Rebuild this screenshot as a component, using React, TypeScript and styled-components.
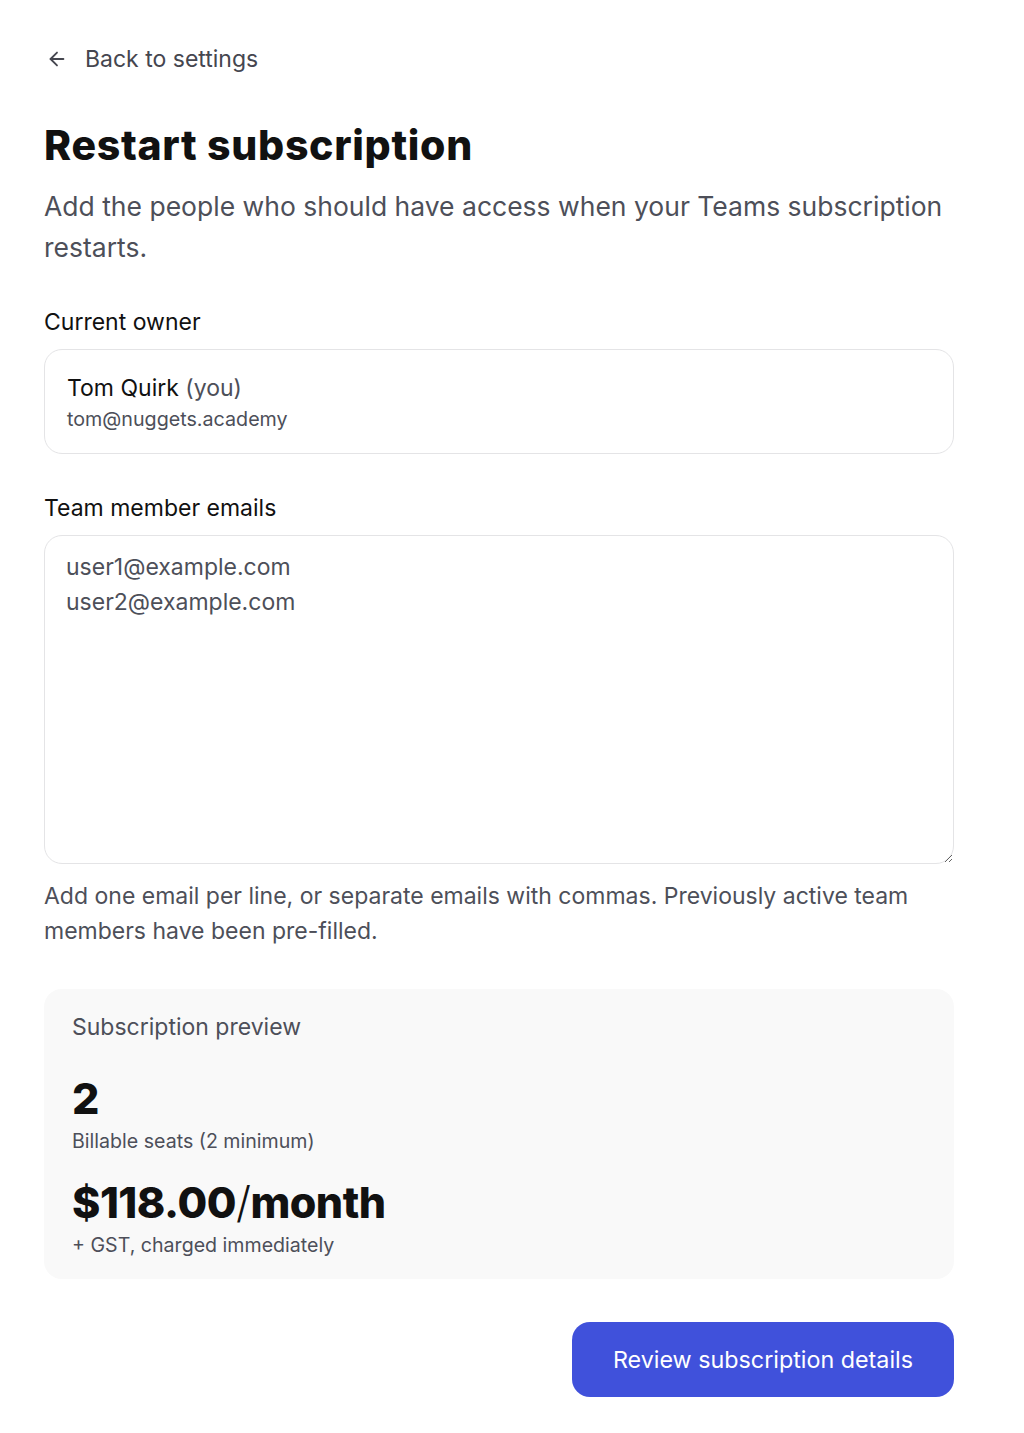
import React from "react";
import styled, { createGlobalStyle } from "styled-components";

const GlobalStyle = createGlobalStyle`
  * { box-sizing: border-box; }
  body {
    margin: 0;
    background: #ffffff;
    font-family: Inter, "Noto Sans", sans-serif;
    color: #111111;
  }
`;

function ArrowLeft() {
  return (
    <svg width="22" height="22" viewBox="0 0 24 24" fill="none" stroke="currentColor" strokeWidth="2" strokeLinecap="round" strokeLinejoin="round">
      <path d="M19 12H5" />
      <path d="M12 19l-7-7 7-7" />
    </svg>
  );
}

function RestartSubscription() {
  const [emails, setEmails] = React.useState("user1@example.com\nuser2@example.com");

  return (
    <Page>
      <BackLink href="#">
        <ArrowLeft />
        Back to settings
      </BackLink>
      <Title>Restart subscription</Title>
      <Lead>Add the people who should have access when your Teams subscription restarts.</Lead>

      <Field>
        <Label>Current owner</Label>
        <OwnerCard>
          <OwnerName>
            Tom Quirk <Muted>(you)</Muted>
          </OwnerName>
          <OwnerEmail>tom@nuggets.academy</OwnerEmail>
        </OwnerCard>
      </Field>

      <Field>
        <Label>Team member emails</Label>
        <EmailArea value={emails} onChange={(ev) => setEmails(ev.target.value)} />
        <Hint>
          Add one email per line, or separate emails with commas. Previously active team members have been
          pre-filled.
        </Hint>
      </Field>

      <Preview>
        <PreviewTitle>Subscription preview</PreviewTitle>
        <Stat>
          <BigNumber>2</BigNumber>
          <StatNote>Billable seats (2 minimum)</StatNote>
        </Stat>
        <Stat>
          <BigNumber>
            $118.00<Slash>/</Slash>month
          </BigNumber>
          <StatNote>+ GST, charged immediately</StatNote>
        </Stat>
      </Preview>

      <Actions>
        <Button>Review subscription details</Button>
      </Actions>
    </Page>
  );
}

const Page = styled("div")`
  width: 998px;
  padding: 44px 44px 37px 44px;
  display: flex;
  flex-direction: column;
`;

const BackLink = styled("a")`
  display: flex;
  align-items: center;
  gap: 17px;
  font-size: 23px;
  color: #45464f;
  text-decoration: none;
  width: fit-content;
  padding-left: 2px;
  line-height: 30px;

  svg {
    color: #45464f;
  }
`;

const Title = styled("h1")`
  margin: 46px 0 0 0;
  font-size: 41px;
  font-weight: 800;
  letter-spacing: 0.7px;
  line-height: 50px;
  color: #111111;
`;

const Lead = styled("p")`
  margin: 16px 0 0 0;
  font-size: 26.5px;
  line-height: 41px;
  color: #4d4f59;
`;

const Field = styled("div")`
  display: flex;
  flex-direction: column;
  margin-top: 39px;
`;

const Label = styled("div")`
  font-size: 23px;
  line-height: 30px;
  font-weight: 400;
  color: #111111;
  margin-bottom: 12px;
`;

const OwnerCard = styled("div")`
  border: 1.5px solid #e4e4e6;
  border-radius: 18px;
  padding: 23px 22px 21px 22px;
  display: flex;
  flex-direction: column;
  gap: 3px;
`;

const OwnerName = styled("div")`
  font-size: 23px;
  line-height: 30px;
  color: #111111;
`;

const Muted = styled("span")`
  color: #4d4f59;
`;

const OwnerEmail = styled("div")`
  font-size: 19.7px;
  line-height: 26px;
  color: #4d4f59;
`;

const EmailArea = styled("textarea")`
  height: 329px;
  border: 1.5px solid #e4e4e6;
  border-radius: 18px;
  padding: 14px 21px;
  font-family: Inter, "Noto Sans", sans-serif;
  font-size: 23px;
  line-height: 35px;
  color: #4d4f59;
  resize: vertical;
  outline: none;
`;

const Hint = styled("p")`
  margin: 15px 0 0 0;
  font-size: 23px;
  line-height: 35px;
  color: #4d4f59;
`;

const Preview = styled("section")`
  margin-top: 40px;
  background: #f9f9f9;
  border-radius: 18px;
  padding: 23px 28px 21px 28px;
  display: flex;
  flex-direction: column;
`;

const PreviewTitle = styled("div")`
  font-size: 23px;
  line-height: 30px;
  color: #4d4f59;
  margin-bottom: 32px;
`;

const Stat = styled("div")`
  display: flex;
  flex-direction: column;
  & + & {
    margin-top: 24px;
  }
`;

const BigNumber = styled("div")`
  font-size: 43px;
  font-weight: 800;
  line-height: 48px;
  letter-spacing: -0.5px;
  color: #111111;
`;

const Slash = styled("span")`
  font-weight: 300;
`;

const StatNote = styled("div")`
  font-size: 19.6px;
  line-height: 26px;
  margin-top: 6px;
  color: #4d4f59;
`;

const Actions = styled("div")`
  display: flex;
  justify-content: flex-end;
  margin-top: 43px;
`;

const Button = styled("button")`
  background: #4051db;
  color: #ffffff;
  border: none;
  border-radius: 18px;
  height: 75px;
  padding: 0 41px;
  font-family: Inter, "Noto Sans", sans-serif;
  font-size: 23.3px;
  cursor: pointer;
  transition: all 0.15s ease-in-out;
  :hover {
    background: #3443c4;
  }
`;

export default function App() {
  return (
    <>
      <GlobalStyle />
      <RestartSubscription />
    </>
  );
}
